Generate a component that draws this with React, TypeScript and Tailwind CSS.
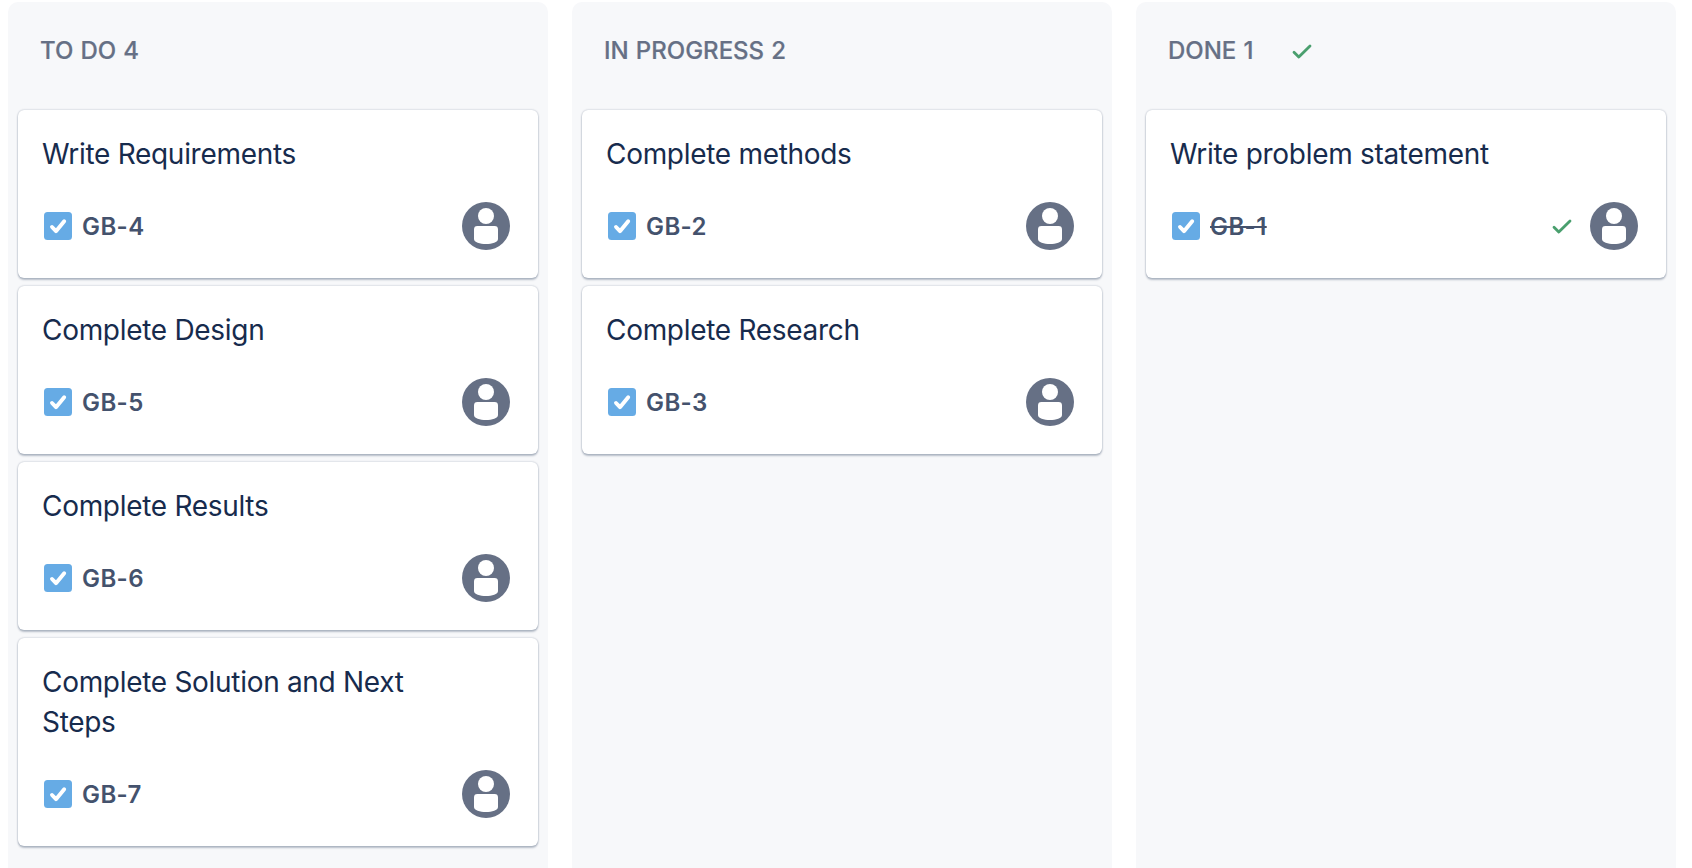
type Task = { id: string; title: string; done?: boolean };
type Column = { name: string; tasks: Task[]; done?: boolean };

const columns: Column[] = [
  {
    name: 'TO DO',
    tasks: [
      { id: 'GB-4', title: 'Write Requirements' },
      { id: 'GB-5', title: 'Complete Design' },
      { id: 'GB-6', title: 'Complete Results' },
      { id: 'GB-7', title: 'Complete Solution and Next Steps' },
    ],
  },
  {
    name: 'IN PROGRESS',
    tasks: [
      { id: 'GB-2', title: 'Complete methods' },
      { id: 'GB-3', title: 'Complete Research' },
    ],
  },
  { name: 'DONE', done: true, tasks: [{ id: 'GB-1', title: 'Write problem statement', done: true }] },
];

function DoneCheck() {
  return (
    <svg width="32" height="32" viewBox="0 0 32 32" fill="none" aria-hidden="true">
      <path d="M8 17.2l4.8 4.9L24 10.9" stroke="#4a9f6e" strokeWidth="2.8" strokeLinecap="round" strokeLinejoin="round" />
    </svg>
  );
}

function TaskIcon() {
  return (
    <svg width="28" height="28" viewBox="0 0 28 28" fill="none" aria-hidden="true">
      <rect width="28" height="28" rx="3.5" fill="#66abe5" />
      <path d="M8 15l4 4.2 8.2-10" stroke="#fff" strokeWidth="3.9" strokeLinecap="round" strokeLinejoin="round" />
    </svg>
  );
}

function Avatar() {
  return (
    <svg width="48" height="48" viewBox="0 0 48 48" aria-hidden="true">
      <circle cx="24" cy="24" r="24" fill="#667085" />
      <circle cx="24" cy="14" r="8" fill="#fff" />
      <path d="M12 27.4a3.4 3.4 0 0 1 3.4-3.4h17.2a3.4 3.4 0 0 1 3.4 3.4v9.6c0 3.4-6 5-12 5s-12-1.6-12-5z" fill="#fff" />
    </svg>
  );
}

function Card({ task }: { task: Task }) {
  return (
    <article className="rounded-[6px] bg-white pt-6 pr-7 pb-7 pl-6 shadow-[0_2px_2px_rgba(9,30,66,0.25),0_0_2px_rgba(9,30,66,0.31)]">
      <h3 className="max-w-[400px] text-[28px] leading-[40px] font-normal tracking-[-0.3px] text-[#172b4d]">{task.title}</h3>
      <div className="mt-7 flex h-12 items-center pl-0.5">
        <TaskIcon />
        <span className={`ml-2.5 pt-0.5 text-[24px] leading-8 font-semibold tracking-[0.4px] text-[#44526d] ${task.done ? 'line-through' : ''}`}>
          {task.id}
        </span>
        <div className="ml-auto flex items-center gap-3">
          {task.done && <DoneCheck />}
          <Avatar />
        </div>
      </div>
    </article>
  );
}

export default function App() {
  return (
    <main className="flex h-[868px] gap-6 overflow-hidden bg-white pt-0.5 pl-2 font-['Inter',sans-serif]">
      {columns.map((column) => (
        <section key={column.name} className="w-[540px] shrink-0 rounded-t-[10px] bg-[#f7f8fa] px-2.5">
          <header className="flex h-[108px] items-center pb-2.5 pl-[22px]">
            <h2 className="text-[24px] leading-8 font-medium [word-spacing:0.7px] text-[#667085] [-webkit-text-stroke:0.2px_#667085]">
              {column.name} {column.tasks.length}
            </h2>
            {column.done && (
              <div className="ml-[33px]">
                <DoneCheck />
              </div>
            )}
          </header>
          <div className="flex flex-col gap-2">
            {column.tasks.map((task) => (
              <Card key={task.id} task={task} />
            ))}
          </div>
        </section>
      ))}
    </main>
  );
}
